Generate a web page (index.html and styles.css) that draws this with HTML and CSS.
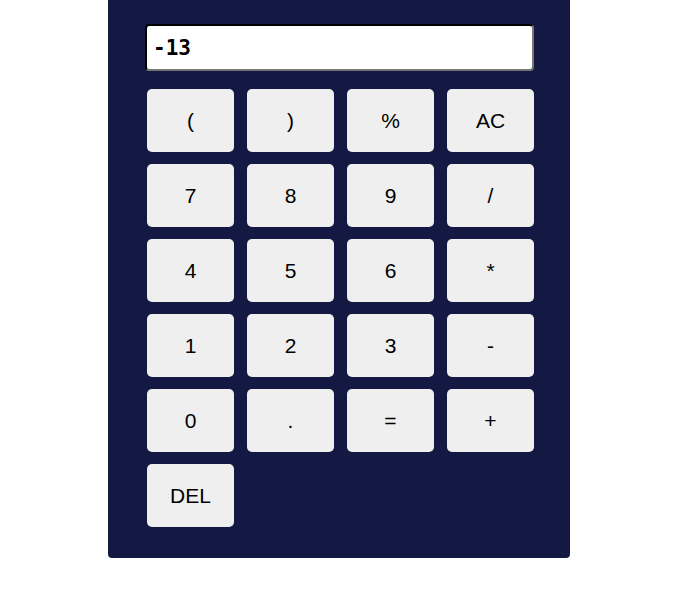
FILE: index.html
```html
<!DOCTYPE html>
<html>
<head>
<meta charset="utf-8">
<link rel="stylesheet" href="styles.css">
</head>
<body>
<div class="calc">
  <input class="display" type="text" value="-13">
  <div class="keys">
    <button class="key">(</button>
    <button class="key">)</button>
    <button class="key">%</button>
    <button class="key">AC</button>
    <button class="key">7</button>
    <button class="key">8</button>
    <button class="key">9</button>
    <button class="key">/</button>
    <button class="key">4</button>
    <button class="key">5</button>
    <button class="key">6</button>
    <button class="key">*</button>
    <button class="key">1</button>
    <button class="key">2</button>
    <button class="key">3</button>
    <button class="key">-</button>
    <button class="key">0</button>
    <button class="key">.</button>
    <button class="key">=</button>
    <button class="key">+</button>
    <button class="key">DEL</button>
  </div>
</div>
</body>
</html>
```
FILE: styles.css
```css
html, body {
  margin: 0;
  padding: 0;
  background: #ffffff;
}
.calc {
  box-sizing: border-box;
  margin-left: 108px;
  width: 462px;
  height: 558px;
  background: #141944;
  border-radius: 0 0 4px 4px;
  padding: 24px 36px 0 37px;
}
.display {
  display: block;
  box-sizing: border-box;
  width: 389px;
  height: 47px;
  margin: 0;
  border: 2px inset #767676;
  border-color: #2b2b2b #767676 #767676 #2b2b2b;
  border-radius: 4px;
  background: #ffffff;
  padding: 0 6px;
  font-family: "DejaVu Sans Mono", "Liberation Mono", monospace;
  font-weight: bold;
  font-size: 21px;
  color: #000;
}
.keys {
  display: grid;
  grid-template-columns: repeat(4, 87px);
  grid-auto-rows: 63px;
  column-gap: 13px;
  row-gap: 12px;
  margin-top: 18px;
  padding-left: 2px;
}
.key {
  border: none;
  border-radius: 5px;
  background: #efefef;
  font-family: "Liberation Sans", Arial, sans-serif;
  font-size: 21px;
  color: #000;
  padding: 0;
}
```
